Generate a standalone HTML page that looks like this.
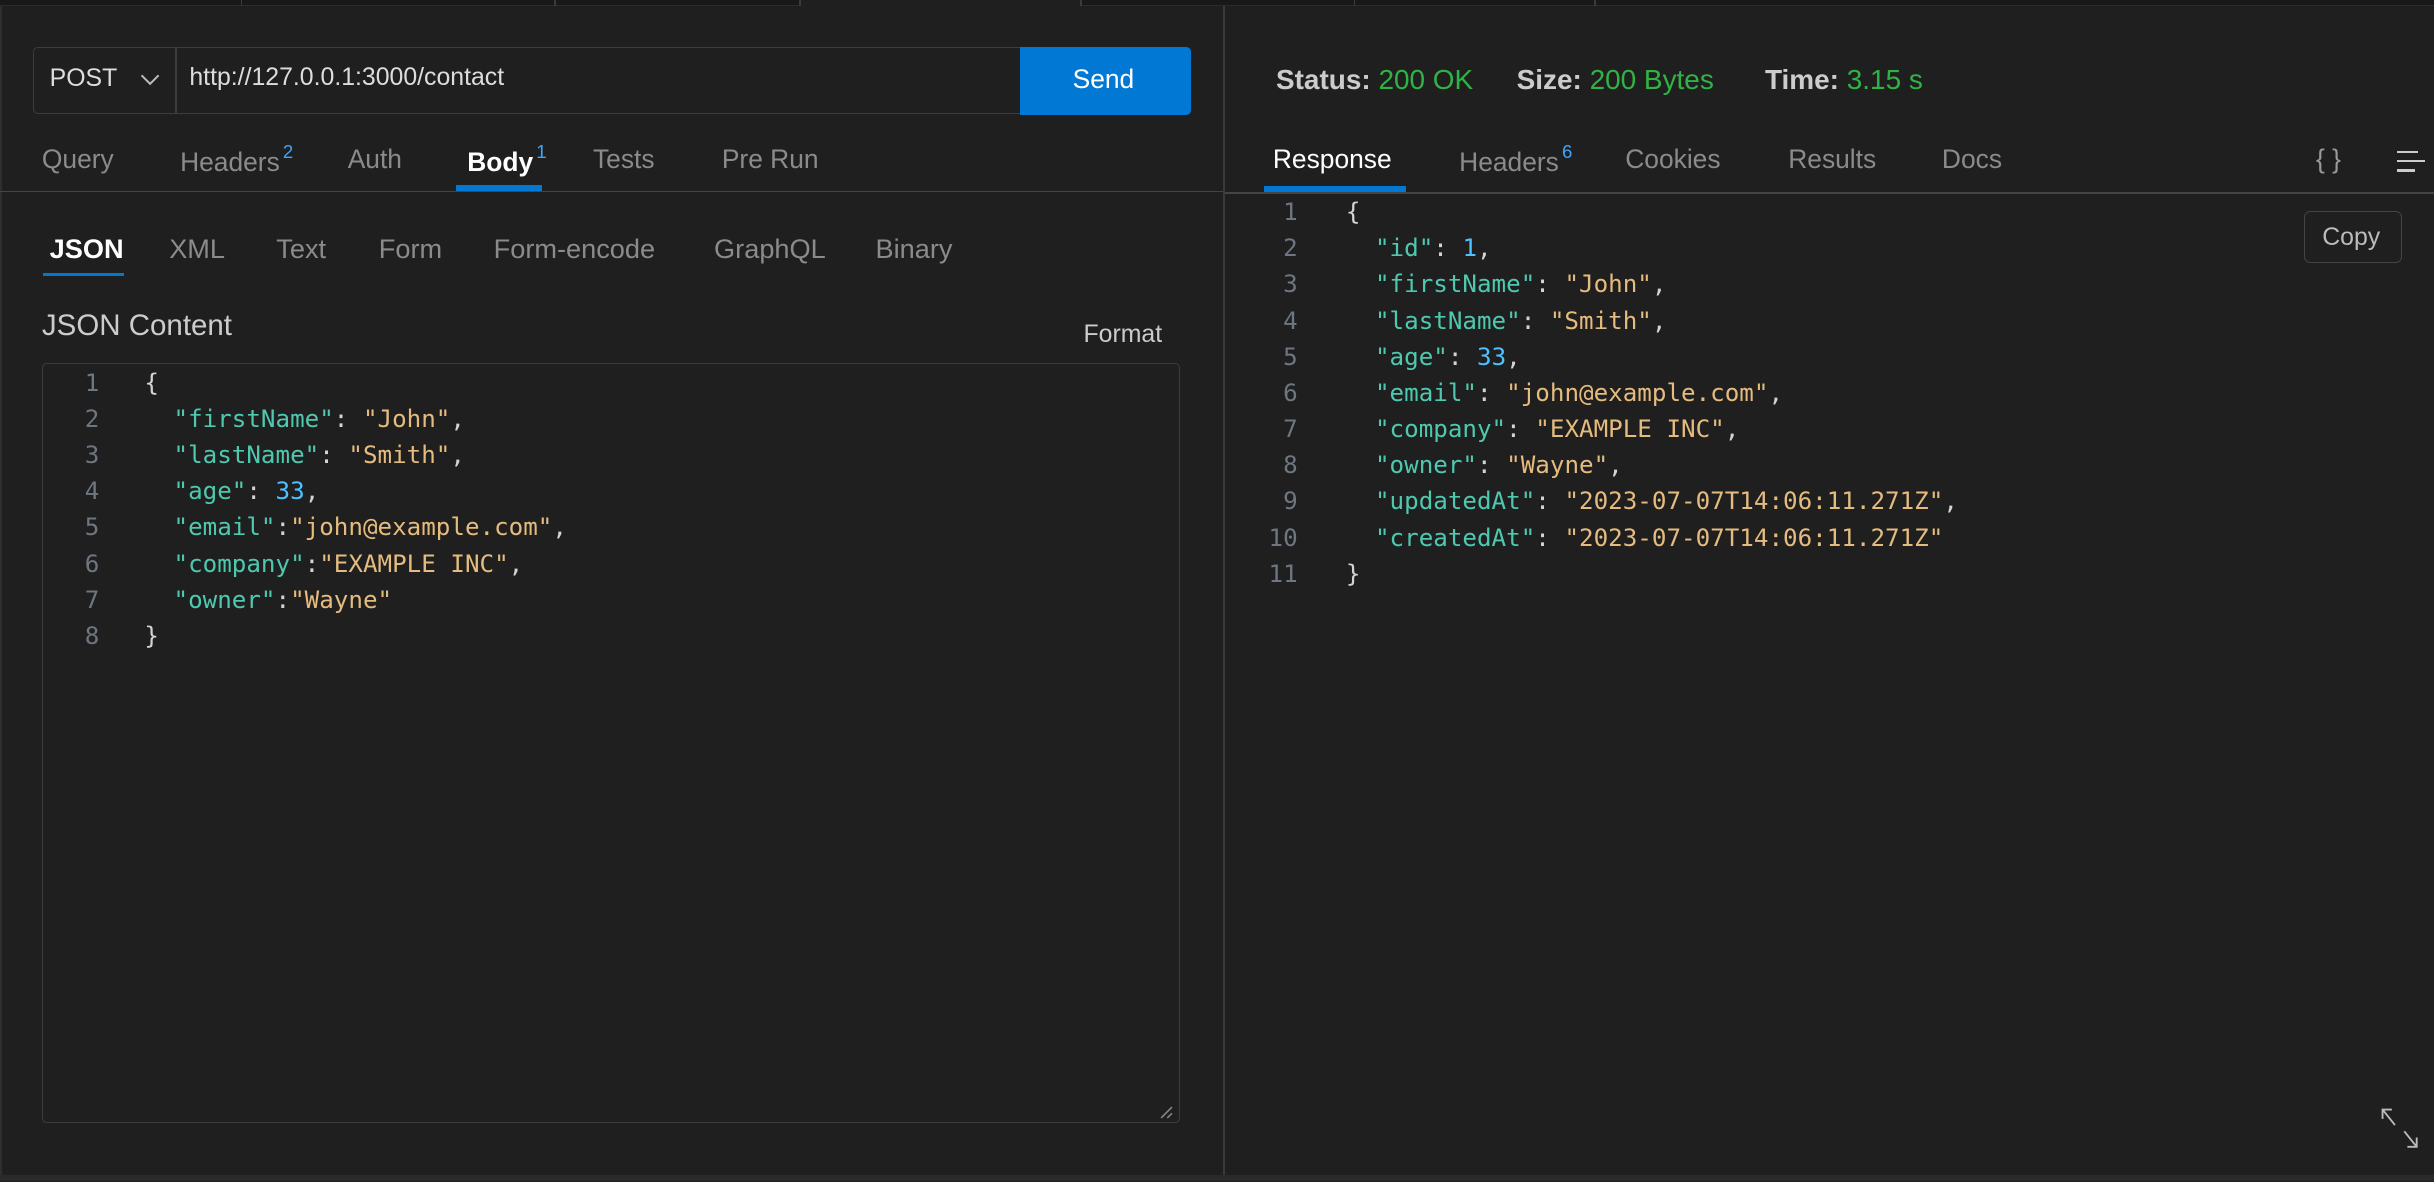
<!DOCTYPE html>
<html><head><meta charset="utf-8"><style>
html,body{margin:0;padding:0;background:#1f1f1f;overflow:hidden}
body{width:2434px;height:1182px}
#r{zoom:1.55230;width:1568px;height:761px;position:relative;font-family:"Liberation Sans",sans-serif;color:#ccc}
.a{position:absolute;white-space:pre}
.top{position:absolute;left:0;top:0;width:1568px;height:3px;background:#181818}
.top2{position:absolute;left:0;top:3px;width:1568px;height:1px;background:#2b2b2b}
.sep{position:absolute;top:0;width:1px;height:4px;background:#3a3a3a}
.tab{position:absolute;top:93px;font-size:17px;color:#8b8b8b}
.tab.on{color:#fff;font-weight:bold}
sup{color:#3ea6ff;font-size:12px;position:relative;top:-2px;margin-left:2px}
.sub{position:absolute;top:150px;font-size:17.5px;color:#8b8b8b}
.code{font-family:"DejaVu Sans Mono",monospace;font-size:15.6px;line-height:23.3px}
.ln{position:absolute;text-align:right;color:#6e7681}
.k{color:#4ec9b0}.s{color:#e5bb7e}.n{color:#4fc1ff}.p{color:#d4d4d4}
</style></head><body><div id="r">
<div class="top"></div><div class="top2"></div>
<div style="position:absolute;left:515px;top:0;width:181px;height:4px;background:#1f1f1f"></div>
<div class="sep" style="left:155px"></div><div class="sep" style="left:357px"></div><div class="sep" style="left:515px"></div><div class="sep" style="left:696px"></div><div class="sep" style="left:872px"></div><div class="sep" style="left:1027px"></div>
<div style="position:absolute;left:0;top:4px;width:1px;height:754px;background:#2e2e2e"></div>
<div style="position:absolute;left:788px;top:4px;width:1px;height:754px;background:#3a3a3a"></div>
<div style="position:absolute;left:0;top:757px;width:1568px;height:4px;background:#2a2a2a"></div>

<!-- URL bar -->
<div style="position:absolute;left:21px;top:30px;width:744px;height:42px;border:1px solid #3c3c3c;border-radius:3px"></div>
<div style="position:absolute;left:113px;top:31px;width:1px;height:42px;background:#3c3c3c"></div>
<div class="a" style="left:32px;top:42px;font-size:16px;color:#ddd">POST</div>
<svg style="position:absolute;left:90px;top:47px" width="13" height="9" viewBox="0 0 13 9"><path d="M1 1.5 L6.5 7 L12 1.5" fill="none" stroke="#bbb" stroke-width="1.3"/></svg>
<div class="a" style="left:122px;top:41px;font-size:16px;color:#ddd">http://127.0.0.1:3000/contact</div>
<div style="position:absolute;left:657px;top:30px;width:110px;height:44px;background:#0078d4;border-radius:0 3px 3px 0"></div>
<div class="a" style="left:691px;top:41px;font-size:17px;color:#fff">Send</div>

<!-- left tabs -->
<div class="tab" style="left:27px">Query</div>
<div class="tab" style="left:116px">Headers<sup>2</sup></div>
<div class="tab" style="left:224px">Auth</div>
<div class="tab on" style="left:301px">Body<sup style="font-weight:normal">1</sup></div>
<div class="tab" style="left:382px">Tests</div>
<div class="tab" style="left:465px">Pre Run</div>
<div style="position:absolute;left:294px;top:119px;width:55px;height:4px;background:#0078d4"></div>
<div style="position:absolute;left:0;top:123px;width:788px;height:1px;background:#444"></div>

<div class="sub" style="left:32px;color:#fff;font-weight:bold">JSON</div>
<div class="sub" style="left:109px">XML</div>
<div class="sub" style="left:178px">Text</div>
<div class="sub" style="left:244px">Form</div>
<div class="sub" style="left:318px">Form-encode</div>
<div class="sub" style="left:460px">GraphQL</div>
<div class="sub" style="left:564px">Binary</div>
<div style="position:absolute;left:28px;top:176px;width:52px;height:2px;background:#0078d4"></div>

<div class="a" style="left:27px;top:199px;font-size:19px;color:#ccc">JSON Content</div>
<div class="a" style="left:698px;top:207px;font-size:16px;color:#ccc">Format</div>

<div style="position:absolute;left:27px;top:234px;width:732px;height:488px;border:1px solid #3c3c3c;border-radius:3px"></div>
<svg style="position:absolute;left:746px;top:711px" width="10" height="10"><path d="M9 2 L2 9 M9 6 L6 9" stroke="#888" stroke-width="1"/></svg>
<div class="code ln" style="left:40px;top:235px;width:24px">1<br>2<br>3<br>4<br>5<br>6<br>7<br>8</div>
<div class="code a" style="left:93px;top:235px"><span class="p">{</span>
<span class="k">  "firstName"</span><span class="p">: </span><span class="s">"John"</span><span class="p">,</span>
<span class="k">  "lastName"</span><span class="p">: </span><span class="s">"Smith"</span><span class="p">,</span>
<span class="k">  "age"</span><span class="p">: </span><span class="n">33</span><span class="p">,</span>
<span class="k">  "email"</span><span class="p">:</span><span class="s">"john@example.com"</span><span class="p">,</span>
<span class="k">  "company"</span><span class="p">:</span><span class="s">"EXAMPLE INC"</span><span class="p">,</span>
<span class="k">  "owner"</span><span class="p">:</span><span class="s">"Wayne"</span>
<span class="p">}</span></div>

<!-- right -->
<div class="a" style="left:822px;top:41px;font-size:18px;font-weight:bold;color:#ccc">Status: <span style="color:#2fb344;font-weight:normal">200 OK</span></div>
<div class="a" style="left:977px;top:41px;font-size:18px;font-weight:bold;color:#ccc">Size: <span style="color:#2fb344;font-weight:normal">200 Bytes</span></div>
<div class="a" style="left:1137px;top:41px;font-size:18px;font-weight:bold;color:#ccc">Time: <span style="color:#2fb344;font-weight:normal">3.15 s</span></div>

<div class="tab on" style="left:820px;font-weight:normal">Response</div>
<div class="tab" style="left:940px">Headers<sup>6</sup></div>
<div class="tab" style="left:1047px">Cookies</div>
<div class="tab" style="left:1152px">Results</div>
<div class="tab" style="left:1251px">Docs</div>
<div class="a" style="left:1492px;top:93px;font-size:17px;color:#999">{ }</div>
<div style="position:absolute;left:1544px;top:97px;width:14px;height:1.5px;background:#ccc"></div>
<div style="position:absolute;left:1544px;top:103px;width:18px;height:1.5px;background:#ccc"></div>
<div style="position:absolute;left:1544px;top:109px;width:12px;height:1.5px;background:#ccc"></div>
<div style="position:absolute;left:814px;top:120px;width:92px;height:4px;background:#0078d4"></div>
<div style="position:absolute;left:789px;top:124px;width:779px;height:1px;background:#444"></div>

<div style="position:absolute;left:1484px;top:136px;width:62px;height:32px;border:1px solid #444;border-radius:4px"></div>
<div class="a" style="left:1496px;top:144px;font-size:16px;color:#bbb">Copy</div>

<div class="code ln" style="left:812px;top:125px;width:24px">1<br>2<br>3<br>4<br>5<br>6<br>7<br>8<br>9<br>10<br>11</div>
<div class="code a" style="left:867px;top:125px"><span class="p">{</span>
<span class="k">  "id"</span><span class="p">: </span><span class="n">1</span><span class="p">,</span>
<span class="k">  "firstName"</span><span class="p">: </span><span class="s">"John"</span><span class="p">,</span>
<span class="k">  "lastName"</span><span class="p">: </span><span class="s">"Smith"</span><span class="p">,</span>
<span class="k">  "age"</span><span class="p">: </span><span class="n">33</span><span class="p">,</span>
<span class="k">  "email"</span><span class="p">: </span><span class="s">"john@example.com"</span><span class="p">,</span>
<span class="k">  "company"</span><span class="p">: </span><span class="s">"EXAMPLE INC"</span><span class="p">,</span>
<span class="k">  "owner"</span><span class="p">: </span><span class="s">"Wayne"</span><span class="p">,</span>
<span class="k">  "updatedAt"</span><span class="p">: </span><span class="s">"2023-07-07T14:06:11.271Z"</span><span class="p">,</span>
<span class="k">  "createdAt"</span><span class="p">: </span><span class="s">"2023-07-07T14:06:11.271Z"</span>
<span class="p">}</span></div>

<svg style="position:absolute;left:1534px;top:714px" width="24" height="26" viewBox="0 0 24 26"><path d="M1 7 V1 H7 M1 1 L9 11 M23 19 V25 H17 M23 25 L15 15" fill="none" stroke="#bbb" stroke-width="1.2"/></svg>
</div></body></html>
